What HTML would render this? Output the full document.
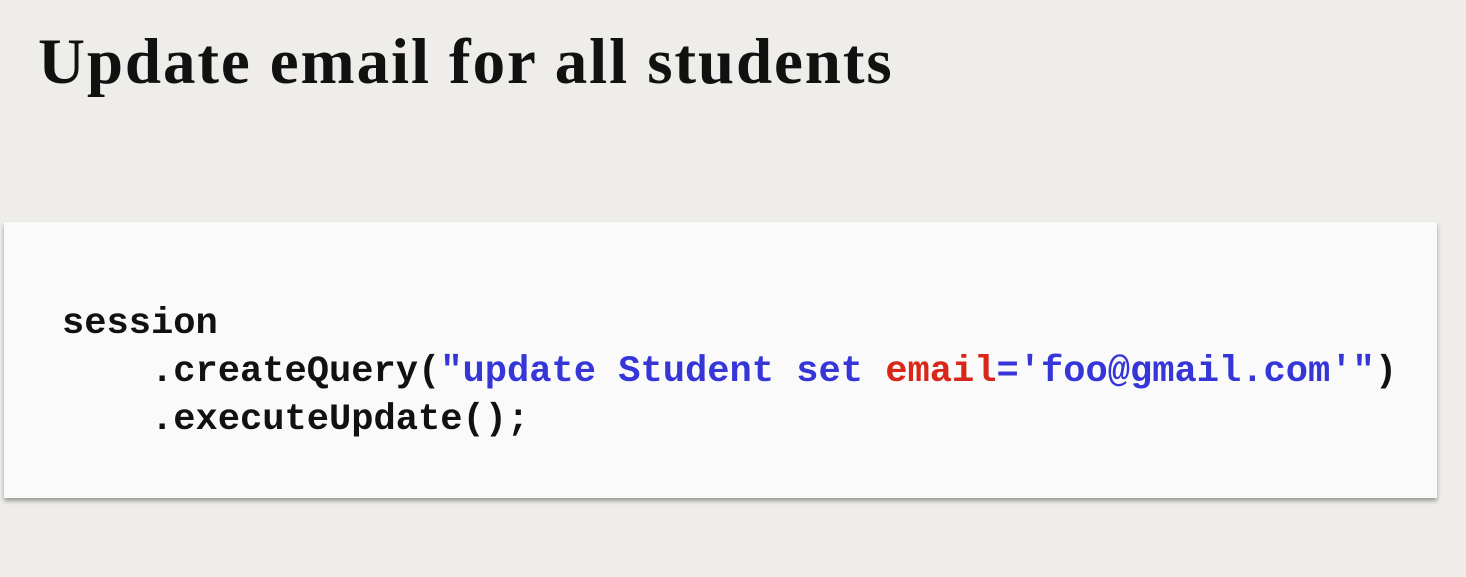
<!DOCTYPE html>
<html><head><style>
html,body{margin:0;padding:0}
body{width:1466px;height:577px;background:#efedea;position:relative;overflow:hidden}
h1{position:absolute;left:38px;top:25px;margin:0;font-family:"Liberation Serif",serif;font-weight:bold;font-size:65px;color:#111;letter-spacing:1.9px;white-space:nowrap}
.box{position:absolute;left:4px;top:222px;width:1433px;height:276px;background:#fafafa;box-shadow:0 3px 4px rgba(0,0,0,0.35)}
pre{position:absolute;left:62px;top:300px;margin:0;font-family:"Liberation Mono",monospace;font-weight:bold;font-size:37.1px;line-height:48px;color:#111}
.b{color:#3535d8}.r{color:#d8261a}
</style></head><body>
<h1>Update email for all students</h1>
<div class="box"></div>
<pre>session
    .createQuery(<span class="b">"update Student set </span><span class="r">email</span><span class="b">='foo@gmail.com'"</span>)
    .executeUpdate();</pre>
</body></html>
